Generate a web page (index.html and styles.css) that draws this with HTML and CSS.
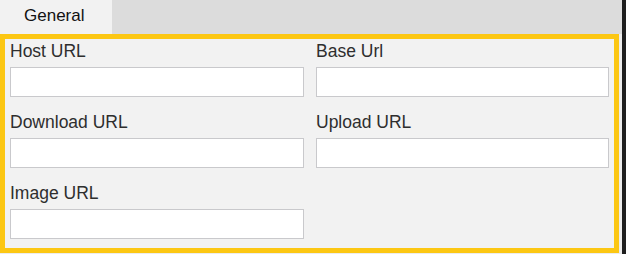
FILE: index.html
```html
<!DOCTYPE html>
<html>
<head>
<meta charset="utf-8">
<link rel="stylesheet" href="styles.css">
</head>
<body>
<div class="window">
  <div class="main">
    <div class="tabbar">
      <div class="tab">General</div>
    </div>
    <div class="panel">
      <div class="grid">
        <div class="field"><label class="label">Host URL</label><input class="input" type="text"></div>
        <div class="field"><label class="label">Base Url</label><input class="input" type="text"></div>
        <div class="field"><label class="label">Download URL</label><input class="input" type="text"></div>
        <div class="field"><label class="label">Upload URL</label><input class="input" type="text"></div>
        <div class="field"><label class="label">Image URL</label><input class="input" type="text"></div>
      </div>
    </div>
  </div>
  <div class="edge"></div>
</div>
</body>
</html>
```

FILE: styles.css
```css
* { box-sizing: border-box; }
html, body {
  margin: 0;
  padding: 0;
  width: 626px;
  height: 254px;
  overflow: hidden;
  background: #ececec;
  font-family: "Liberation Sans", Arial, sans-serif;
}
.window {
  display: flex;
  height: 254px;
}
.main {
  width: 622px;
  display: flex;
  flex-direction: column;
  background: #ececec;
}
.edge {
  width: 4px;
  background: #1e1e1e;
}
.tabbar {
  height: 34px;
  background: #dcdcdc;
  display: flex;
}
.tab {
  width: 112px;
  background: #f2f2f2;
  color: #111;
  font-size: 17px;
  line-height: 20px;
  padding: 6px 0 0 24px;
}
.panel {
  width: 619px;
  height: 219px;
  border: 5px solid #fcc713;
  background: #f2f2f2;
  padding: 2px 5px 9px 5px;
}
.grid {
  display: grid;
  grid-template-columns: 294px 293px;
  column-gap: 12px;
  row-gap: 15px;
}
.field {
  display: flex;
  flex-direction: column;
}
.label {
  font-size: 17.5px;
  line-height: 20px;
  color: #2e2e2e;
  margin-bottom: 6px;
}
.input {
  height: 30px;
  border: 1px solid #c9c9cc;
  background: #fff;
  margin: 0;
  padding: 0 4px;
  outline: none;
  font-size: 15px;
}
```
